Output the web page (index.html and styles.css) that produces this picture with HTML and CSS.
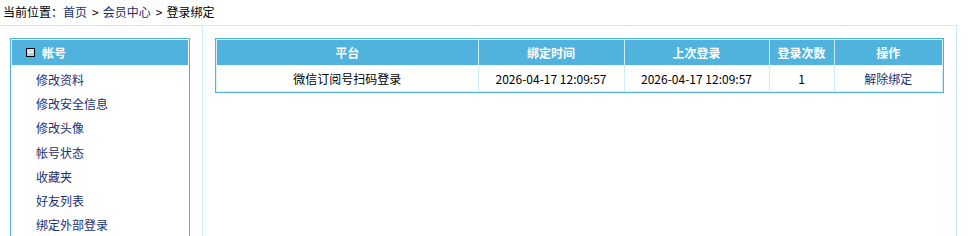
FILE: index.html
```html
<!DOCTYPE html>
<html lang="zh-CN">
<head>
<meta charset="utf-8">
<title>登录绑定</title>
<link rel="stylesheet" href="styles.css">
</head>
<body>
<div class="crumb">当前位置：<a href="#">首页</a><span class="sep">&gt;</span><a href="#">会员中心</a><span class="sep">&gt;</span>登录绑定</div>
<div class="main">
  <div class="side">
    <div class="box">
      <div class="box-head">
        <svg class="ico" width="9" height="9" viewBox="0 0 9 9"><rect x="0.5" y="0.5" width="8" height="8" fill="#a9d6ec" stroke="#000"/><rect x="1" y="1" width="7" height="3" fill="#c7e6f5"/><line x1="2" y1="4.5" x2="7" y2="4.5" stroke="#eef8fd" stroke-width="1"/></svg>
        <span>帐号</span>
      </div>
      <ul class="menu">
        <li><a href="#">修改资料</a></li>
        <li><a href="#">修改安全信息</a></li>
        <li><a href="#">修改头像</a></li>
        <li><a href="#">帐号状态</a></li>
        <li><a href="#">收藏夹</a></li>
        <li><a href="#">好友列表</a></li>
        <li><a href="#">绑定外部登录</a></li>
      </ul>
    </div>
  </div>
  <div class="content">
    <div class="tbl-wrap">
      <table class="tbl">
        <colgroup><col class="c1"><col class="c2"><col class="c3"><col class="c4"><col class="c5"></colgroup>
        <thead>
          <tr><th>平台</th><th>绑定时间</th><th>上次登录</th><th>登录次数</th><th>操作</th></tr>
        </thead>
        <tbody>
          <tr><td>微信订阅号扫码登录</td><td>2026-04-17 12:09:57</td><td>2026-04-17 12:09:57</td><td>1</td><td><a href="#">解除绑定</a></td></tr>
        </tbody>
      </table>
    </div>
  </div>
</div>
</body>
</html>
```
FILE: styles.css
```css
* { box-sizing: border-box; }
html, body { margin: 0; padding: 0; background: #fff; }
body {
  font-family: "Microsoft YaHei", "Noto Sans CJK SC", "Noto Sans", sans-serif;
  font-size: 12px;
  color: #000;
}
a { color: #1a2f72; text-decoration: none; }
.crumb {
  height: 25px;
  line-height: 24px;
  padding-left: 3px;
  white-space: nowrap;
}
.sep { padding: 0 4px 0 5px; }
.main {
  width: 957px;
  border-top: 1px solid #c9eefa;
  display: flex;
  height: 211px;
  overflow: hidden;
}
.side {
  width: 202px;
  flex: none;
  padding: 12px 0 0 10px;
}
.box {
  width: 180px;
  border: 1px solid #4fb3dd;
  padding: 1px;
  min-height: 260px;
}
.box-head {
  height: 25px;
  background: #4fb3dd;
  display: flex;
  align-items: center;
  padding-left: 14px;
  gap: 7px;
  color: #fff;
  font-weight: bold;
  font-size: 12px;
}
.ico { display: block; flex: none; }
.menu {
  list-style: none;
  margin: 0;
  padding: 3px 0 0 24px;
}
.menu li {
  height: 24.2px;
  line-height: 24px;
}
.content {
  flex: 1;
  border-left: 1px solid #c9eefa;
  border-right: 1px solid #c9eefa;
  padding: 12px 12px 0 12px;
}
.tbl-wrap {
  width: 729px;
  border: 1px solid #4fb3dd;
  padding: 1px;
  background: #d3f0fb;
}
.tbl {
  width: 725px;
  border-collapse: collapse;
  table-layout: fixed;
  background: #fff;
}
.c1 { width: 261px; }
.c2 { width: 146px; }
.c3 { width: 145px; }
.c4 { width: 65px; }
.c5 { width: 108px; }
.tbl th, .tbl td {
  text-align: center;
  padding: 0;
  border-right: 1px solid #c9eefa;
  white-space: nowrap;
}
.tbl th:last-child, .tbl td:last-child { border-right: none; }
.tbl th {
  height: 25px;
  background: #4fb3dd;
  color: #fff;
  font-weight: bold;
}
.tbl td {
  height: 26px;
  color: #000;
}
```
